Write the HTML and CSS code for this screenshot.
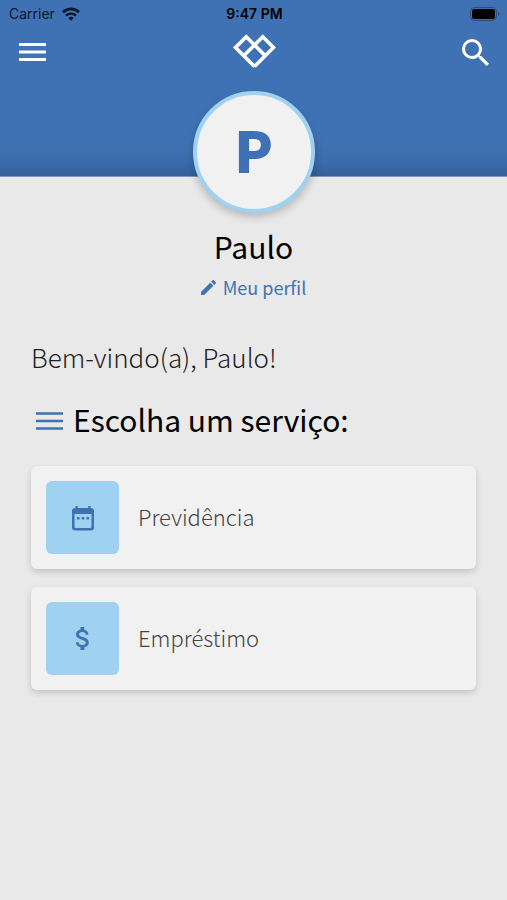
FILE: index.html
```html
<!DOCTYPE html>
<html lang="pt-BR">
<head>
<meta charset="utf-8">
<meta name="viewport" content="width=device-width, initial-scale=1">
<title>Serviços</title>
<link rel="stylesheet" href="styles.css">
</head>
<body>
<header class="header">
  <div class="status">
    <span class="carrier">Carrier
      <svg class="wifi" viewBox="0 0 18 14" width="18" height="14" aria-hidden="true"><path d="M1 5.2a11.5 11.5 0 0 1 16 0" fill="none" stroke="currentColor" stroke-width="2.8"/><path d="M4 8.6a7.2 7.2 0 0 1 10 0" fill="none" stroke="currentColor" stroke-width="2.4"/><path d="M6.4 11a3.8 3.8 0 0 1 5.2 0L9 13.8z" fill="currentColor"/></svg>
    </span>
    <span class="time">9:47 PM</span>
    <svg class="battery" viewBox="0 0 30 14" width="30" height="14" aria-hidden="true"><rect x=".5" y=".5" width="26" height="13" rx="4" fill="none" stroke="#2a4e80"/><rect x="2" y="2" width="23" height="10" rx="2.5" fill="#000"/><path d="M28 4.8q3 2.200 0 4.400z" fill="#2a4e80"/></svg>
  </div>
  <nav class="toolbar">
    <button class="icon-button" aria-label="Menu"><svg viewBox="0 0 28 20" width="28" height="20"><path d="M1 2.500h27M1 10h27M1 17.500h27" stroke="currentColor" stroke-width="3"/></svg></button>
    <svg class="logo" viewBox="0 0 44 38" width="44" height="38" aria-hidden="true"><path d="M22.500 33.500L3.500 14.500 14.250 3.750 33 22.500M12 22.500L30.750 3.750 41.500 14.500 22.500 33.500" fill="none" stroke="currentColor" stroke-width="3.600"/></svg>
    <button class="icon-button search" aria-label="Buscar"><svg viewBox="3 3 17.500 17.500" width="27" height="27"><path fill="currentColor" d="M15.500 14h-.79l-.28-.27A6.471 6.471 0 0 0 16 9.500 6.500 6.500 0 1 0 9.500 16c1.610 0 3.090-.59 4.230-1.570l.27.28v.79l5 4.990L20.490 19l-4.990-5zm-6 0C7.010 14 5 11.990 5 9.500S7.010 5 9.500 5 14 7.010 14 9.500 11.990 14 9.500 14z"/></svg></button>
  </nav>
</header>
<main class="page">
  <section class="profile">
    <div class="avatar">P</div>
    <h1 class="name">Paulo</h1>
    <a class="profile-link" href="#"><svg viewBox="3 3 18 18" width="15" height="15" aria-hidden="true"><path fill="currentColor" d="M3 17.250V21h3.750L17.810 9.940l-3.750-3.750L3 17.250zM20.710 7.040a1 1 0 0 0 0-1.410l-2.340-2.340a1 1 0 0 0-1.410 0l-1.830 1.830 3.750 3.750 1.830-1.830z"/></svg>Meu perfil</a>
  </section>
  <p class="welcome">Bem-vindo(a), Paulo!</p>
  <h2 class="heading"><svg viewBox="0 0 28 22" width="28" height="22" aria-hidden="true"><path d="M0 5.500h27M0 13h27M0 20.500h27" stroke="currentColor" stroke-width="2.600"/></svg>Escolha um serviço:</h2>
  <div class="services">
    <a class="card" href="#">
      <span class="tile"><svg viewBox="0 0 24 26" width="24" height="26" aria-hidden="true"><path fill="currentColor" fill-rule="evenodd" d="M4.500 1h2.300v2h10.400V1h2.300v2H20a3 3 0 0 1 3 3v16.500a3 3 0 0 1-3 3H4a3 3 0 0 1-3-3V6a3 3 0 0 1 3-3h.5zM3.500 9v13a1 1 0 0 0 1 1h15a1 1 0 0 0 1-1V9z"/><path fill="currentColor" d="M6 12h2.500v2.500H6zM10.750 12h2.500v2.500h-2.500zM15.500 12H18v2.500h-2.500z"/></svg></span>
      <span class="label">Previdência</span>
    </a>
    <a class="card" href="#">
      <span class="tile"><svg viewBox="5 3 14 18" width="18" height="23" aria-hidden="true"><path fill="currentColor" d="M11.800 10.900c-2.270-.59-3-1.200-3-2.150 0-1.090 1.010-1.850 2.700-1.850 1.780 0 2.440.85 2.500 2.100h2.210c-.07-1.720-1.120-3.300-3.210-3.810V3h-3v2.160c-1.940.42-3.500 1.680-3.500 3.610 0 2.310 1.910 3.460 4.700 4.130 2.500.6 3 1.480 3 2.410 0 .69-.49 1.790-2.700 1.790-2.060 0-2.870-.92-2.980-2.100h-2.200c.12 2.190 1.760 3.420 3.680 3.830V21h3v-2.150c1.950-.37 3.500-1.500 3.500-3.550 0-2.840-2.430-3.810-4.700-4.400z"/></svg></span>
      <span class="label">Empréstimo</span>
    </a>
  </div>
</main>
</body>
</html>
```
FILE: styles.css
```css
* { box-sizing: border-box; }

body {
  margin: 0;
  min-height: 100vh;
  background: #e9e9e9;
  color: #000;
  font-family: "Noto Sans CJK JP", "Noto Sans", sans-serif;
}

a { color: inherit; text-decoration: none; }
svg { display: block; flex: none; }

.header {
  height: 177px;
  background: linear-gradient(#3f72b5 0, #3f72b5 80%, #3c6cac 92%, #355f98 100%);
  border-bottom: 1px solid #7d97bb;
  color: #fff;
}

.status {
  display: grid;
  grid-template-columns: 1fr auto 1fr;
  align-items: center;
  height: 27px;
  padding: 0 7px 0 9px;
  color: #06152b;
  font: 14px/20px Inter, sans-serif;
}

.carrier { display: flex; align-items: center; gap: 7px; }
.time { font-weight: 600; color: #000; }
.battery { justify-self: end; }

.toolbar {
  display: grid;
  grid-template-columns: 1fr auto 1fr;
  align-items: center;
  height: 50px;
  padding: 0 18px;
}

.icon-button {
  justify-self: start;
  padding: 0;
  border: 0;
  background: none;
  color: #fff;
}

.search { justify-self: end; }

.page { padding: 0 31px 32px; }

.profile {
  display: flex;
  flex-direction: column;
  align-items: center;
  margin-top: -86px;
}

.avatar {
  width: 122px;
  height: 122px;
  border: 4px solid #9fd1f1;
  border-radius: 50%;
  background: #f1f1f1;
  box-shadow: 0 4px 8px rgba(0, 0, 0, .22);
  color: #3f72b5;
  font-size: 57px;
  font-weight: 900;
  line-height: 106px;
  text-align: center;
}

.name {
  margin: 11px 0 0;
  font-size: 30px;
  font-weight: 400;
  line-height: 44px;
}

.profile-link {
  display: flex;
  align-items: center;
  gap: 7px;
  margin-top: 5px;
  color: #3f72b5;
  font-size: 18px;
  line-height: 28px;
}

.welcome {
  margin: 36px 0 0;
  color: #222;
  font-size: 26px;
  font-weight: 300;
  line-height: 40px;
}

.heading {
  display: flex;
  align-items: center;
  gap: 9px;
  margin: 18px 0 0;
  padding-left: 5px;
  font-size: 30px;
  font-weight: 400;
  line-height: 48px;
}

.heading svg { color: #3f72b5; }

.services {
  display: grid;
  gap: 18px;
  margin-top: 23px;
}

.card {
  display: flex;
  align-items: center;
  gap: 19px;
  padding: 15px;
  border-radius: 6px;
  background: #f1f1f1;
  box-shadow: 0 3px 6px rgba(0, 0, 0, .16);
}

.tile {
  display: grid;
  place-items: center;
  width: 73px;
  height: 73px;
  border-radius: 6px;
  background: #9fd1f1;
  color: #3f72b5;
}

.label {
  padding-bottom: 3px;
  color: #444;
  font-size: 22px;
  font-weight: 300;
  line-height: 32px;
}
```
